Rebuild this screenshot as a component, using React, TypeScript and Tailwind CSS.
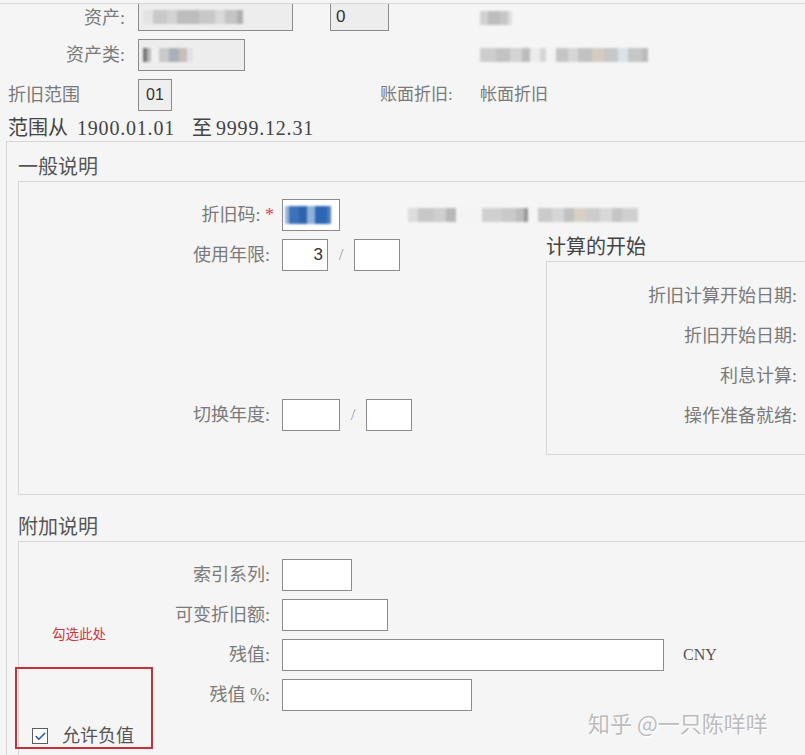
import { Check } from "lucide-react";

const cjk = "font-['Liberation_Serif','Noto_Sans_CJK_SC',serif]";

// pixelated blur blocks standing in for masked values
const Mosaic = ({ blocks, h = "h-[14px]" }: { blocks: [number, string][]; h?: string }) => (
  <div className={`flex items-center blur-[1px] ${h}`}>
    {blocks.map(([w, c], i) => (
      <div key={i} className="h-full" style={{ width: w, background: c }} />
    ))}
  </div>
);

const Label = ({ children, w = "w-[251px]" }: { children: React.ReactNode; w?: string }) => (
  <div className={`${w} shrink-0 text-right text-[18px] leading-[32px] text-[#7a7a7a]`}>{children}</div>
);

const Box = ({ w, children, className = "" }: { w: string; children?: React.ReactNode; className?: string }) => (
  <div className={`${w} h-[32px] shrink-0 border border-[#8c8c8c] bg-white flex items-center ${className}`}>{children}</div>
);

const Slash = () => <div className="w-[26px] shrink-0 text-center text-[17px] text-[#a0a0a0]">/</div>;

export default function App() {
  return (
    <div className={`relative h-[755px] w-[805px] overflow-hidden bg-[#f5f5f5] pt-[3px] ${cjk}`}>
      <div className="border-t border-[#d6d6d6]">
        {/* header fields */}
        <div className="flex h-[27px] items-center">
          <Label w="w-[125px]">资产:</Label>
          <div className="ml-[13px] flex h-[27px] w-[155px] items-center border border-t-0 border-[#8c8c8c] bg-[#ededed] pl-[4px]">
            <Mosaic blocks={[[10, "#e4e4e4"], [14, "#c9c9c9"], [10, "#d3d3d3"], [22, "#bdbdbd"], [16, "#c8c8c8"], [10, "#d9d9d9"], [12, "#c4c4c4"], [6, "#b0b0b0"]]} />
          </div>
          <div className="ml-[37px] flex h-[27px] w-[59px] items-center border border-t-0 border-[#8c8c8c] bg-[#ededed] pl-[5px] font-['Liberation_Sans',sans-serif] text-[17px] text-[#333]">0</div>
          <div className="ml-[91px]">
            <Mosaic blocks={[[8, "#d0d0d0"], [12, "#bdbdbd"], [8, "#c6c6c6"], [4, "#dedede"]]} />
          </div>
        </div>
        <div className="mt-[8px] flex h-[32px] items-center">
          <Label w="w-[125px]">资产类:</Label>
          <div className="ml-[13px] flex h-[32px] w-[107px] items-center border border-[#8c8c8c] bg-[#ededed] pl-[4px]">
            <Mosaic blocks={[[4, "#777"], [4, "#bbb"], [8, "#f0f0f0"], [10, "#c9c9c9"], [10, "#a9b0bb"], [8, "#c8bfb8"], [6, "#dfe3e8"]]} />
          </div>
          <div className="ml-[235px]">
            <Mosaic blocks={[[16, "#cdcdcd"], [14, "#c3c3c3"], [12, "#d3d3d3"], [8, "#bdbdbd"], [10, "#ececec"], [6, "#d6d6d6"], [10, "#f2f2f2"], [12, "#c5c5c5"], [10, "#d6d6d6"], [14, "#c2c2c2"], [12, "#d4ccc0"], [14, "#c7c7c7"], [10, "#dde2e8"], [14, "#c6c6c6"], [6, "#bbbbbb"]]} />
          </div>
        </div>
        <div className="mt-[8px] flex h-[32px] items-center">
          <div className="w-[125px] pl-[8px] text-[18px] text-[#7a7a7a]">折旧范围</div>
          <div className="ml-[13px] flex h-[32px] w-[34px] items-center justify-center border border-[#8c8c8c] bg-[#efefef] font-['Liberation_Sans',sans-serif] text-[16px] text-[#333]">01</div>
          <div className="ml-[208px] w-[100px] text-[17px] text-[#7a7a7a]">账面折旧:</div>
          <div className="text-[17px] text-[#7a7a7a]">帐面折旧</div>
        </div>
        <div className="flex h-[30px] items-center pl-[8px] pt-[4px] text-[20px] text-[#444]">
          <span>范围从</span>
          <span className="ml-[9px] tracking-[0.8px]">1900.01.01</span>
          <span className="ml-[17px]">至</span>
          <span className="ml-[4px] tracking-[0.8px]">9999.12.31</span>
        </div>

        {/* outer frame */}
        <div className="ml-[6px] border-l border-t border-[#d6d6d6] pl-[11px]">
          <div className="flex h-[39px] items-center pt-[11px] text-[20px] text-[#555]">一般说明</div>
          <div className="h-[314px] border-b border-l border-t border-[#d6d6d6] pt-[17px]">
            <div className="flex h-[32px] items-center">
              <div className="w-[255px] shrink-0 text-right text-[18px] leading-[32px] text-[#7a7a7a]">
                折旧码: <span className="text-[#d9464f]">*</span>
              </div>
              <Box w="w-[58px] ml-[8px]" className="pl-[2px]">
                <Mosaic h="h-[18px]" blocks={[[4, "#9bb5d6"], [10, "#3d72b8"], [8, "#2f64ad"], [8, "#8fb1da"], [12, "#2b67b2"], [4, "#4a7dbd"]]} />
              </Box>
              <div className="ml-[68px]">
                <Mosaic blocks={[[10, "#dcdcdc"], [16, "#c8c8c8"], [12, "#cfcfcf"], [10, "#b8b8b8"], [26, "#f4f4f4"], [20, "#d0d0d0"], [14, "#c9c9c9"], [8, "#bdbdbd"], [4, "#999"], [10, "#f4f4f4"], [14, "#cacaca"], [12, "#d6d6d6"], [10, "#c1c1c1"], [12, "#d8d0c4"], [14, "#cdcdcd"], [12, "#d8d8d8"], [10, "#c5c5c5"], [16, "#d0d0d0"]]} />
              </div>
            </div>

            <div className="mt-[8px] flex">
              <div className="w-[527px] shrink-0">
                <div className="flex h-[32px] items-center">
                  <Label>使用年限:</Label>
                  <Box w="w-[46px] ml-[12px]" className="justify-end pr-[4px] font-['Liberation_Sans',sans-serif] text-[17px] text-[#333]">3</Box>
                  <Slash />
                  <Box w="w-[46px]" />
                </div>
                <div className="mt-[128px] flex h-[32px] items-center">
                  <Label>切换年度:</Label>
                  <Box w="w-[58px] ml-[12px]" />
                  <Slash />
                  <Box w="w-[46px]" />
                </div>
              </div>
              <div className="-mt-[2px] shrink-0">
                <div className="mb-[4px] h-[20px] text-[20px] leading-[20px] text-[#444]">计算的开始</div>
                <div className="flex h-[194px] w-[400px] flex-col gap-[8px] border-b border-l border-t border-[#d6d6d6] pt-[18px]">
                  {["折旧计算开始日期:", "折旧开始日期:", "利息计算:", "操作准备就绪:"].map((t) => (
                    <div key={t} className="flex h-[32px] items-center">
                      <Label w="w-[250px]">{t}</Label>
                    </div>
                  ))}
                </div>
              </div>
            </div>
          </div>

          <div className="flex h-[46px] items-center pt-[18px] text-[20px] text-[#555]">附加说明</div>
          <div className="h-[300px] border-l border-t border-[#d6d6d6] pt-[17px]">
            <div className="flex flex-col gap-[8px]">
              <div className="flex h-[32px] items-center">
                <Label>索引系列:</Label>
                <Box w="w-[70px] ml-[12px]" />
              </div>
              <div className="flex h-[32px] items-center">
                <Label>可变折旧额:</Label>
                <Box w="w-[106px] ml-[12px]" />
              </div>
              <div className="flex h-[32px] items-center">
                <Label>残值:</Label>
                <Box w="w-[382px] ml-[12px]" />
                <span className="ml-[19px] font-['Liberation_Serif',serif] text-[16px] text-[#555]">CNY</span>
              </div>
              <div className="flex h-[32px] items-center">
                <Label>残值 %:</Label>
                <Box w="w-[190px] ml-[12px]" />
              </div>
            </div>
            <div className="mt-[17px] flex h-[16px] items-center pl-[13px]">
              <div className="flex h-[16px] w-[16px] items-center justify-center border border-[#5c5c5c] bg-white">
                <Check className="h-[13px] w-[13px] text-[#1e5aa6]" strokeWidth={3} />
              </div>
              <span className="ml-[14px] text-[18px] text-[#555]">允许负值</span>
            </div>
          </div>
        </div>
      </div>

      {/* annotation overlays */}
      <div className="absolute left-[52px] top-[624px] font-['Noto_Sans_CJK_SC',sans-serif] text-[13.5px] leading-[18px] text-[#d0343f]">勾选此处</div>
      <div className="absolute left-[15px] top-[667px] h-[82px] w-[138px] border-2 border-[#c5303b]" />
      <div className="absolute left-[588px] top-[707px] font-['Noto_Sans_CJK_SC',sans-serif] text-[22px] leading-[30px] text-[#bcbcbc] [text-shadow:1px_1px_0_#ffffff]">
        知乎 @一只陈咩咩
      </div>
    </div>
  );
}
